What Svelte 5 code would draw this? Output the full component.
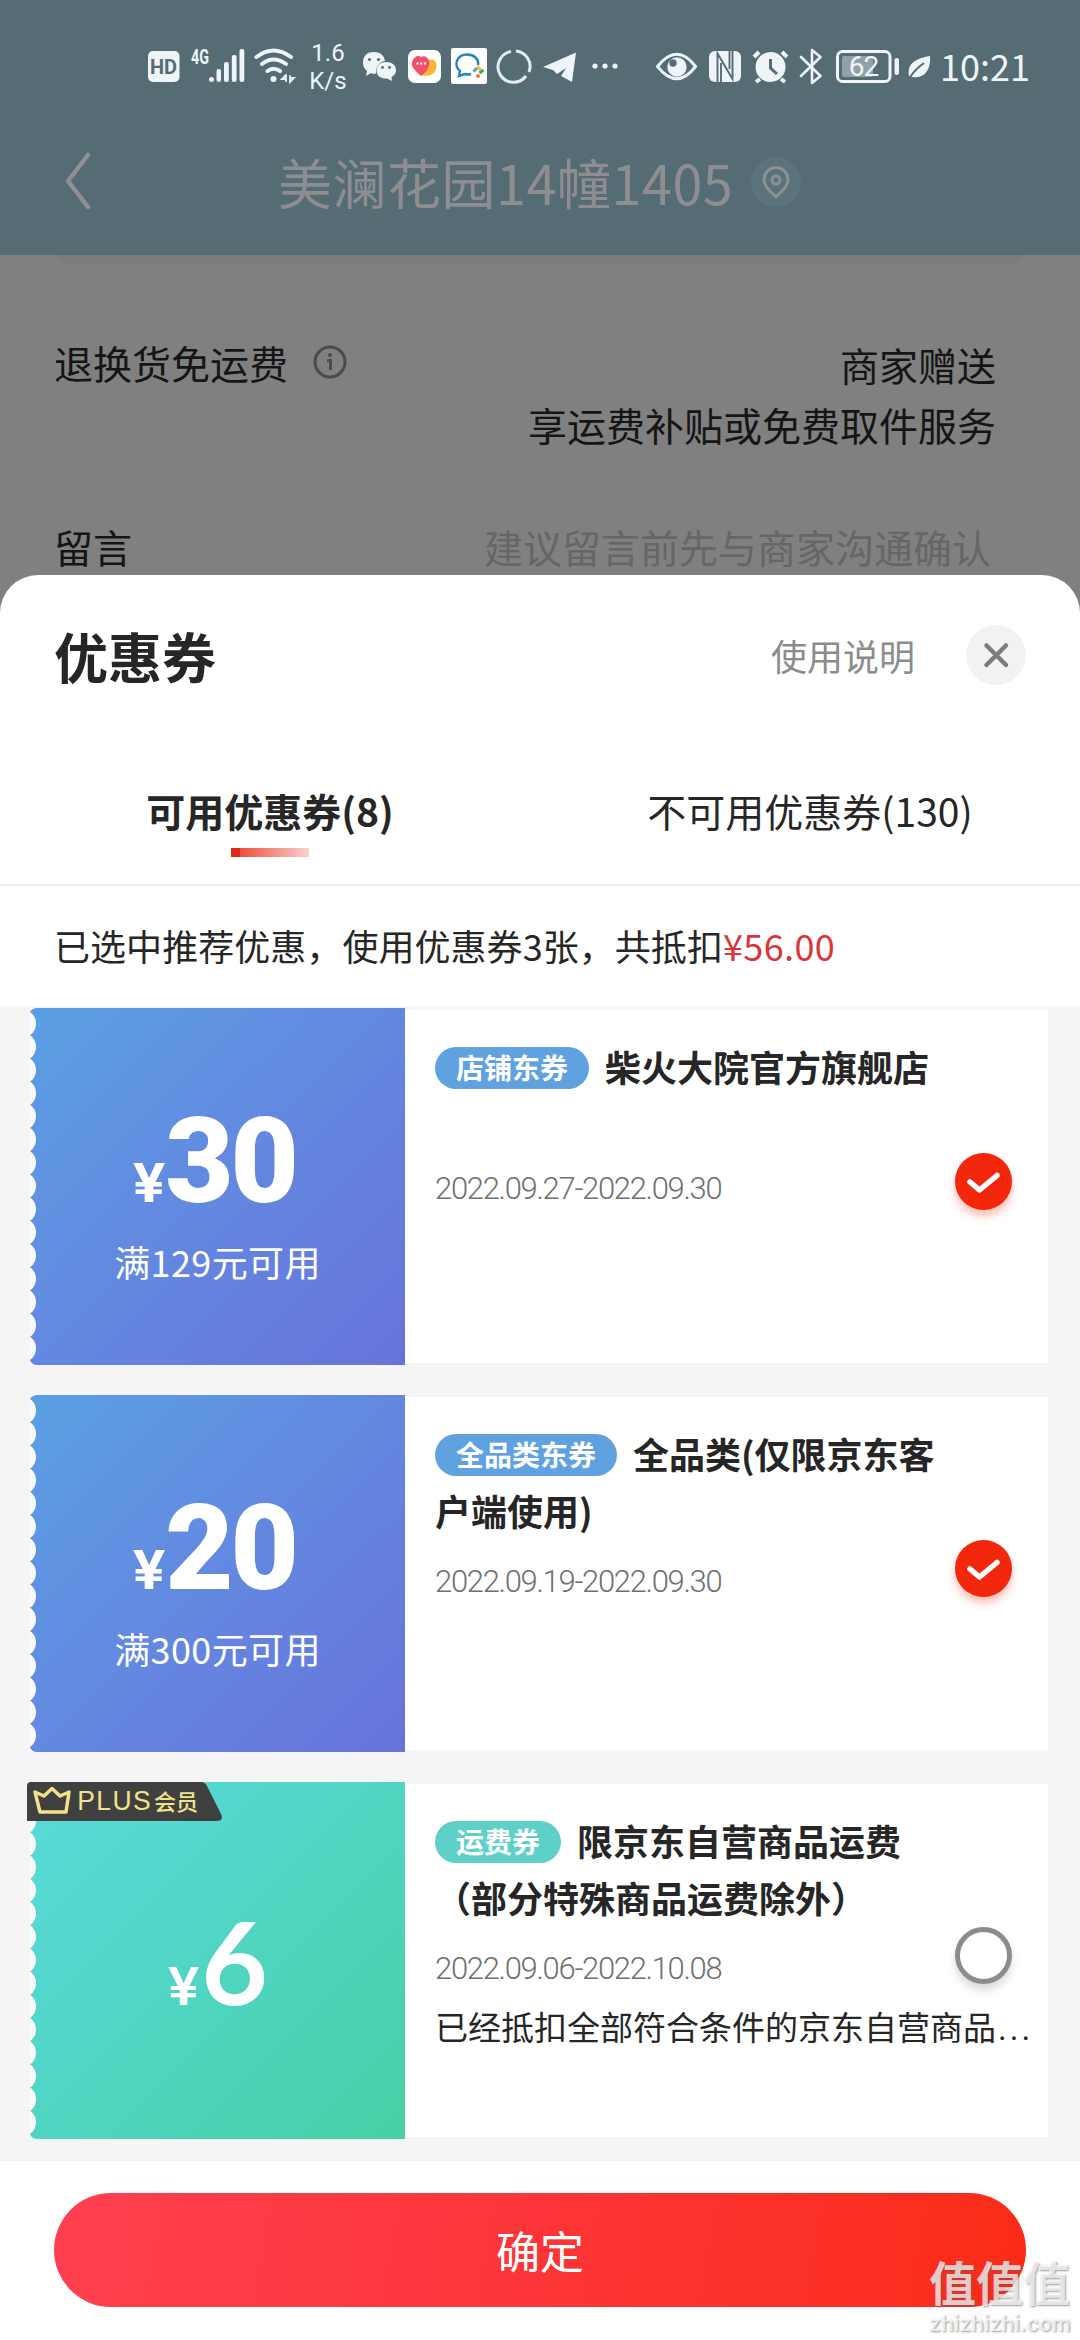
<script>
  const coupons = [
    { kind: 'blue', amount: '30', rule: '满129元可用', tag: '店铺东券', lines: ['柴火大院官方旗舰店'], date: '2022.09.27-2022.09.30', checked: true },
    { kind: 'blue', amount: '20', rule: '满300元可用', tag: '全品类东券', lines: ['全品类(仅限京东客', '户端使用)'], date: '2022.09.19-2022.09.30', checked: true },
    { kind: 'mint', amount: '6', plus: true, tag: '运费券', lines: ['限京东自营商品运费', '（部分特殊商品运费除外）'], date: '2022.09.06-2022.10.08', note: '已经抵扣全部符合条件的京东自营商品', checked: false }
  ];
  // Perforated left edge: fifteen shallow bites between two small corner notches.
  const bite = 23.2;
  let edge = 'M0 0H6Q1 1 0 4';
  for (let i = 0; i < 15; i++) edge += `C8 ${4 + i * bite + 5} 8 ${4 + i * bite + 18} 0 ${4 + (i + 1) * bite}`;
  edge += 'Q1 356 6 357H0Z';
</script>

<div class="screen">
  <header class="top">
    <div class="status">
      <svg width="184" height="60" viewBox="0 36 184 60"><rect x="148" y="51" width="31.500" height="31" rx="5" fill="#eef4f7"/><text x="163.500" y="74" class="hd">HD</text></svg>
      <svg width="66" height="60" viewBox="184 36 66 60" fill="#eef4f7"><text x="191" y="64" class="net" textLength="18" lengthAdjust="spacingAndGlyphs">4G</text><circle cx="211.500" cy="79.500" r="2.500"/><rect x="216.500" y="69" width="4.500" height="13" rx="2"/><rect x="224" y="62" width="4.800" height="20" rx="2"/><rect x="231.800" y="55" width="4.800" height="27" rx="2"/><rect x="239.500" y="49" width="4.800" height="33" rx="2"/></svg>
      <svg width="52" height="60" viewBox="250 36 52 60" fill="none" stroke="#eef4f7" stroke-width="4" stroke-linecap="round"><path d="M256.500 57Q273.500 44 291 57M262 64Q273.500 55 286 64M267.500 71Q273.500 66.500 280 71"/><circle cx="273.500" cy="79" r="3" fill="#eef4f7" stroke="none"/><path d="M286 75V81M286 75L282 79H286M290 76V82L294 78H290" stroke-width="1.800"/></svg>
      <div class="speed"><span>1.6</span><span>K/s</span></div>
      <svg width="48" height="60" viewBox="354 36 48 60" fill="#eef4f7"><path d="M374 52C366 52 363 57 363 62.500C363 67 365 69 367 71L366 76L371 73C373 74 375 74 376 73.500C375 66 381 61 385 61C384 55 380 52 374 52Z"/><path d="M386 62C380 62 376.500 66 376.500 70.500C376.500 76 381 79 387 78.500L392 81L391.500 77C395 75 396 73 396 70C396 65 392 62 386 62Z"/><g fill="#566c75"><circle cx="369.500" cy="59.500" r="1.600"/><circle cx="378.500" cy="59.500" r="1.600"/><circle cx="382.500" cy="67.500" r="1.400"/><circle cx="389.500" cy="67.500" r="1.400"/></g></svg>
      <svg width="44" height="60" viewBox="402 36 44 60"><rect x="408" y="50" width="33" height="33" rx="7" fill="#fff"/><path d="M420 75C431 78 437 72 436.500 65C436 59 430 58 427 62Z" fill="#fdb62c"/><path d="M421 76C415 70 410 67 412.500 61C414 56 419 55 421 57C424 55 429 57 429.500 63C429 69 424 74 421 76Z" fill="#f4506b"/><path d="M416.500 63.500H426" stroke="#fff" stroke-width="2" stroke-dasharray="2 1.700"/></svg>
      <svg width="48" height="60" viewBox="446 36 48 60"><rect x="451" y="48" width="36" height="36" rx="2" fill="#fff"/><path d="M471 74Q468 75 465 74L459 76L460 71C453 65 457 54.500 467 54.500C474 54.500 479 59 478 65" fill="none" stroke="#2486b8" stroke-width="2.400"/><path d="M473.500 71.500L477 68" stroke="#40a4d8" stroke-width="3"/><path d="M477 66.500L481 70" stroke="#f0c03a" stroke-width="3"/><path d="M479.500 73L483.500 70" stroke="#50a94c" stroke-width="3"/><circle cx="478" cy="76" r="2" fill="#df7a45"/></svg>
      <svg width="46" height="60" viewBox="494 36 46 60" fill="none" stroke="#e4ecf0" stroke-width="3"><path d="M516 51A15.500 15.500 0 0 1 529 72M526 76A15.500 15.500 0 1 1 511 51.500"/></svg>
      <svg width="46" height="60" viewBox="540 36 46 60" fill="#eef4f7"><path d="M543 67L576 52.500L572 82L561 76L566 68L557 74L553 70Z"/></svg>
      <svg width="60" height="60" viewBox="586 36 60 60" fill="#eef4f7"><circle cx="595" cy="66" r="2.600"/><circle cx="605" cy="66" r="2.600"/><circle cx="615" cy="66" r="2.600"/></svg>
      <svg width="58" height="60" viewBox="646 36 58 60"><path d="M657.500 66.500Q677 42 695.500 66.500Q677 91 657.500 66.500Z" fill="none" stroke="#eef4f7" stroke-width="3"/><circle cx="677" cy="67" r="9.700" fill="#eef4f7"/><circle cx="673" cy="63" r="3.700" fill="#566c75"/></svg>
      <svg width="44" height="60" viewBox="704 36 44 60"><rect x="709" y="51" width="32" height="31" rx="6" fill="#eef4f7"/><path d="M717.500 82V53.500L732.500 79V51M721 82V63M729.500 51V69" fill="none" stroke="#566c75" stroke-width="1.900"/></svg>
      <svg width="46" height="60" viewBox="748 36 46 60"><circle cx="770.500" cy="67" r="15" fill="#eef4f7"/><path d="M754 57L759 52M782 52L787 57M760 79L756 82M781 79L785 82" stroke="#eef4f7" stroke-width="4"/><path d="M770.500 59V68L777 74" fill="none" stroke="#566c75" stroke-width="3"/></svg>
      <svg width="36" height="60" viewBox="794 36 36 60" fill="none" stroke="#eef4f7" stroke-width="2.600" stroke-linejoin="round" stroke-linecap="round"><path d="M801 57L820.500 76L812 83V50L820.500 57L801 76"/></svg>
      <svg width="74" height="60" viewBox="830 36 74 60"><rect x="837.500" y="51.500" width="52.500" height="30" rx="5" fill="none" stroke="#eef4f7" stroke-width="3"/><rect x="842" y="56" width="31" height="21" rx="2" fill="#93a1a6"/><rect x="894.500" y="58" width="4.500" height="17" rx="2" fill="#eef4f7"/><text x="863.500" y="76" class="batt">62</text></svg>
      <svg width="36" height="60" viewBox="904 36 36 60"><path d="M909 76C907 65 913 59 930 56C931 69 925 79 913 77Z" fill="#eef4f7"/><path d="M909 79Q914 70 924 63" fill="none" stroke="#566c75" stroke-width="2"/></svg>
      <time>10:21</time>
    </div>
    <div class="address">
      <svg class="back" width="40" height="64" viewBox="0 0 40 64"><path d="M31 6L11 32L31 58" fill="none" stroke="#8e9091" stroke-width="4.500" stroke-linecap="round" stroke-linejoin="round"/></svg>
      <h1>美澜花园14幢1405</h1>
      <svg class="pin" width="50" height="50" viewBox="0 0 50 50"><circle cx="25" cy="25" r="25" fill="#5c727c"/><path d="M25 40C20 35 13 30 13 22.500A12 12 0 0 1 37 22.500C37 30 30 35 25 40Z" fill="none" stroke="#8e9091" stroke-width="3"/><circle cx="25" cy="23" r="4" fill="none" stroke="#8e9091" stroke-width="3"/></svg>
    </div>
  </header>

  <section class="order">
    <div class="stub"></div>
    <div class="row">
      <div class="label">退换货免运费<svg width="34" height="34" viewBox="0 0 34 34" fill="none" stroke="#4b4b4b" stroke-width="3"><circle cx="17" cy="17" r="15"/><path d="M14 15.500H17.500V25"/><circle cx="17" cy="10" r="1.400" fill="#4b4b4b" stroke-width="1.200"/></svg></div>
      <div class="value"><p>商家赠送</p><p>享运费补贴或免费取件服务</p></div>
    </div>
    <div class="row memo"><div class="label">留言</div><div class="hint">建议留言前先与商家沟通确认</div></div>
  </section>

  <main class="sheet">
    <div class="head">
      <h2>优惠券</h2>
      <span class="help">使用说明</span>
      <button class="close" aria-label="关闭"><svg width="60" height="60" viewBox="0 0 60 60"><path d="M20.500 20.500L40 40M40 20.500L20.500 40" stroke="#7c7c7c" stroke-width="4.500" stroke-linecap="round"/></svg></button>
    </div>
    <nav class="tabs">
      <div class="tab on"><span>可用优惠券(8)</span><i></i></div>
      <div class="tab"><span>不可用优惠券(130)</span></div>
    </nav>
    <p class="summary">已选中推荐优惠，使用优惠券3张，共抵扣<b>¥56.00</b></p>

    <div class="list">
      {#each coupons as c}
        <article class="coupon {c.kind}">
          <div class="ticket">
            <svg class="edge" width="8" height="357" viewBox="0 0 8 357"><path d={edge} fill="#f8f9fa"/></svg>
            {#if c.plus}
              <div class="plus">
                <svg class="plusbg" width="196" height="39" viewBox="0 0 196 39"><path d="M0 39V4Q0 0 4 0H174Q178 0 180 4L194 32Q197 39 190 39Z" fill="#404040"/></svg>
                <svg width="40" height="32" viewBox="0 0 40 32"><path d="M3 8L12 12L20 4.500L28 12L37 8L34 28H8Z" fill="none" stroke="#f2e28c" stroke-width="3.500" stroke-linejoin="round"/></svg>
                <span class="plustext">PLUS</span><span class="member">会员</span>
              </div>
            {/if}
            <div class="amount"><small>¥</small><strong>{c.amount}</strong></div>
            {#if c.rule}<p class="rule">{c.rule}</p>{/if}
          </div>
          <div class="detail">
            <div class="title"><div class="line"><span class="tag">{c.tag}</span>{c.lines[0]}</div>{#if c.lines[1]}<div class="line">{c.lines[1]}</div>{/if}</div>
            <p class="date" class:single={!c.lines[1]}>{c.date}</p>
            {#if c.note}<p class="note">{c.note}<span class="more">...</span></p>{/if}
            <div class="pick" class:checked={c.checked}>
              {#if c.checked}<svg width="57" height="57" viewBox="0 0 57 57"><path d="M15 29L24.500 37L42 22.500" fill="none" stroke="#fff" stroke-width="5.500" stroke-linecap="round" stroke-linejoin="round"/></svg>{/if}
            </div>
          </div>
        </article>
      {/each}
    </div>

    <footer><button class="confirm">确定</button></footer>
  </main>

  <div class="mark"><span class="mark-cn">值值值</span><span class="mark-en">zhizhizhi.com</span></div>
</div>

<style>
  :global(body) { margin: 0; background: #808080; }
  * { box-sizing: border-box; }
  h1, h2, p { margin: 0; font-weight: 400; }
  button { border: 0; padding: 0; font-family: inherit; }
  svg { display: block; flex: none; }
  .screen { position: relative; width: 1080px; height: 2340px; overflow: hidden; background: #808080; font-family: "Noto Sans CJK SC", sans-serif; color: #262626; display: flex; flex-direction: column; }

  .top { height: 255px; flex: none; background: #566c75; }
  .status { height: 122px; padding-top: 36px; display: flex; color: #eef4f7; }
  .hd { font: 700 20px Roboto, sans-serif; fill: #566c75; text-anchor: middle; }
  .net { font: 700 20px Roboto, sans-serif; }
  .batt { font: 400 28px Roboto, sans-serif; fill: #eef4f7; text-anchor: middle; letter-spacing: -1px; }
  .speed { width: 52px; height: 60px; display: flex; flex-direction: column; align-items: center; padding-left: 5px; padding-right: 5px; font: 400 24px/28px Roboto, sans-serif; margin-top: 1px; padding-top: 2px; }
  time { font: 400 36px/60px "Noto Sans CJK SC", sans-serif; margin-top: -1px; }
  .address { height: 120px; display: flex; align-items: center; padding-left: 57px; }
  .back { margin-top: -2px; }
  h1 { font-size: 54px; line-height: 80px; letter-spacing: .5px; color: #8e8d90; margin-left: 181px; white-space: nowrap; width: 454px; }
  .pin { margin-left: 19px; }

  .order { height: 320px; flex: none; color: #151515; font-size: 39px; line-height: 60px; }
  .stub { margin: 0 57px; height: 9px; border-radius: 0 0 14px 14px; background: #7b7b7b; }
  .row { display: flex; justify-content: space-between; padding: 68px 84px 0 54px; }
  .label { display: flex; align-items: center; height: 60px; }
  .label svg { margin-left: 25px; margin-top: -1px; }
  .value { text-align: right; padding-top: 2px; }
  .row.memo { padding-top: 62px; padding-right: 89px; }
  .hint { color: #666; }

  .sheet { height: 1765px; flex: none; background: #fff; border-radius: 38px 38px 0 0; display: flex; flex-direction: column; }
  .head { height: 160px; display: flex; align-items: center; padding: 0 54px; flex: none; }
  h2 { font-size: 54px; font-weight: 700; line-height: 80px; flex: 1; margin-top: 2px; }
  .help { font-size: 36px; color: #8c8c8c; line-height: 50px; margin-right: 51px; }
  .close { width: 60px; height: 60px; border-radius: 50%; background: #f2f2f2; }
  .tabs { display: flex; height: 151px; flex: none; border-bottom: 2px solid #ececec; }
  .tab { width: 540px; display: flex; flex-direction: column; align-items: center; font-size: 39px; line-height: 60px; padding-top: 45px; }
  .on { font-weight: 700; }
  .tab i { width: 78px; height: 9px; margin-top: 8px; background: linear-gradient(90deg, #df2d15 0 11%, #ed4f3f 12%, #f8d2ce); }
  .summary { height: 120px; flex: none; padding: 29px 54px 0; font-size: 36px; line-height: 60px; letter-spacing: .05px; white-space: nowrap; }
  .summary b { font-weight: 400; color: #d8363b; letter-spacing: .4px; }

  .list { height: 1155px; flex: none; background: #f5f5f5; padding: 2px 32px 22px 30px; display: flex; flex-direction: column; gap: 30px; }
  .coupon { height: 357px; display: flex; align-items: center; }
  .ticket { position: relative; flex: none; width: 375px; height: 357px; color: #fff; text-align: center; padding-top: 84px; }
  .blue .ticket { background: linear-gradient(135deg, #5aa0e3, #6389e0 48%, #6873db); }
  .mint .ticket { background: linear-gradient(135deg, #59dadb, #51d5c3 48%, #45d1a5); }
  .edge { position: absolute; left: 0; top: 0; }
  .amount { display: flex; justify-content: center; align-items: baseline; height: 140px; line-height: 140px; font-family: Roboto, sans-serif; padding-right: 5px; }
  .amount small { font-family: Inter, sans-serif; font-size: 53px; font-weight: 700; margin-right: 1px; transform: scaleX(1.1); }
  .amount strong { font-size: 118px; font-weight: 900; letter-spacing: -3px; }
  .mint .ticket { padding-top: 108px; }
  .mint .amount { padding-right: 0; }
  .mint .amount small { font-weight: 600; font-size: 52px; margin-right: 3px; }
  .mint .amount strong { font-family: Lato, sans-serif; font-size: 115px; font-weight: 700; letter-spacing: -2px; }
  .rule { font-size: 36px; line-height: 60px; margin-top: -1px; letter-spacing: .4px; }
  .plus { position: absolute; left: -3px; top: 0; width: 196px; height: 39px; display: flex; align-items: center; padding: 0 0 4px 5px; color: #f2e28c; }
  .plusbg { position: absolute; left: 0; top: 0; }
  .plus > :not(.plusbg) { position: relative; }
  .plustext { font: 400 27px/36px "Liberation Sans", sans-serif; letter-spacing: 1.500px; margin-left: 5px; width: 77px; margin-top: 3px; transform: scaleX(.98); transform-origin: left; }
  .member { font-size: 22px; font-weight: 500; line-height: 36px; }

  .detail { position: relative; flex: 1; min-width: 0; height: 353px; background: #fff; padding: 28px 20px 0 30px; }
  .line { display: flex; align-items: center; height: 57px; font-size: 36px; font-weight: 700; line-height: 57px; white-space: nowrap; }
  .tag { height: 42px; line-height: 40px; border-radius: 21px; padding: 0 21px; margin-right: 16px; color: #fff; font-size: 28px; background: #5fa2df; margin-top: 3px; }
  .mint .tag { background: #5dd0c8; }
  .date { font: 300 31px/44px Roboto, sans-serif; color: #707070; letter-spacing: -1.300px; margin-top: 21px; }
  .date.single { margin-top: 72px; }
  .note { font-size: 33px; line-height: 56px; margin-top: 7px; white-space: nowrap; }
  .more { font-family: Roboto, sans-serif; line-height: 1; letter-spacing: 3px; margin-left: 2px; }
  .pick { position: absolute; right: 36px; top: 143px; width: 57px; height: 57px; border-radius: 50%; border: 5px solid #8c8c8c; box-shadow: 0 6px 8px rgba(0, 0, 0, .15); }
  .checked { border: 0; background: #f2270c; box-shadow: 0 6px 8px rgba(242, 39, 12, .3); }

  footer { height: 179px; flex: none; padding: 32px 54px; }
  .confirm { display: block; width: 972px; height: 114px; border-radius: 57px; color: #fff; font-size: 44px; background: linear-gradient(100deg, #ff4050, #fd3538 50%, #fa2c17); }

  .mark { position: absolute; left: 929px; top: 2253px; width: 148px; display: flex; flex-direction: column; color: rgba(255, 255, 255, .74); text-shadow: 1px 1px 2px rgba(90, 90, 90, .6); }
  .mark-cn { font-size: 47px; font-weight: 700; line-height: 56px; }
  .mark-en { font: 600 21px/24px Inter, sans-serif; margin-top: 3px; }
</style>
